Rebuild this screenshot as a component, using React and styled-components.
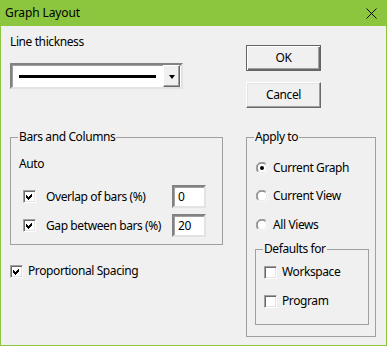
import styled, { createGlobalStyle } from "styled-components";

const GlobalStyle = createGlobalStyle`
  html, body {
    margin: 0;
    padding: 0;
    background: #f0f0f0;
  }
  body {
    font-family: "Noto Sans", "Liberation Sans", sans-serif;
    font-size: 12px;
    line-height: 16px;
    letter-spacing: -0.4px;
    color: #000;
  }
`;

const Window = styled.div`
  width: 387px;
  height: 346px;
  box-sizing: border-box;
  border: 1px solid #8cc63f;
  border-top: 0;
  background: #f0f0f0;
  display: flex;
  flex-direction: column;
`;

const TitleBar = styled.div`
  height: 26px;
  flex: none;
  background: #8cc63f;
  display: flex;
  align-items: center;
  justify-content: space-between;
  padding: 0 9px 0 4px;
`;

const Title = styled.span`
  font-size: 12px;
  letter-spacing: -0.1px;
`;

const Body = styled.div`
  display: grid;
  grid-template-columns: 213px 130px;
  column-gap: 23px;
  padding-left: 9px;
  align-items: start;
`;

const Column = styled.div`
  display: flex;
  flex-direction: column;
  align-items: flex-start;
`;

const Label = styled.div`
  margin-top: ${(p) => p.$top || 0}px;
`;

const Combo = styled.div`
  margin-top: 13px;
  width: 173px;
  height: 26px;
  box-sizing: border-box;
  border: 2px solid;
  border-color: #828282 #e3e3e3 #e3e3e3 #828282;
  box-shadow: inset 1px 1px 0 #a0a0a0;
  background: #fff;
  display: flex;
  align-items: center;
  padding: 0 1px 0 7px;
`;

const LineSample = styled.div`
  flex: 1;
  height: 3px;
  background: #000;
  margin-right: 7px;
`;

const DropButton = styled.div`
  width: 17px;
  height: 22px;
  box-sizing: border-box;
  border: 1px solid;
  border-color: #fff #696969 #696969 #fff;
  box-shadow: inset -1px -1px 0 #a0a0a0;
  background: #f0f0f0;
  display: flex;
  align-items: center;
  justify-content: center;
`;

const Arrow = styled.span`
  width: 0;
  height: 0;
  border-left: 3.5px solid transparent;
  border-right: 3.5px solid transparent;
  border-top: 4px solid #000;
  margin-top: 1px;
`;

const Group = styled.fieldset`
  margin: ${(p) => p.$top || 0}px 0 0 0;
  padding: ${(p) => p.$pad};
  width: ${(p) => p.$width}px;
  min-inline-size: 0;
  box-sizing: border-box;
  border: 1px solid #a0a0a0;
  display: flex;
  flex-direction: column;
`;

const Legend = styled.legend`
  padding: 0 1px;
  margin-left: -1px;
  line-height: 16px;
`;

const Row = styled.div`
  display: flex;
  align-items: center;
  margin-top: ${(p) => p.$top || 0}px;
  padding-left: ${(p) => p.$indent || 0}px;
`;

const RowText = styled.span`
  margin-left: ${(p) => p.$gap}px;
  width: ${(p) => (p.$width ? `${p.$width}px` : "auto")};
`;

const NumberBox = styled.div`
  width: 34px;
  height: 23px;
  box-sizing: border-box;
  border: 2px solid;
  border-color: #828282 #e3e3e3 #e3e3e3 #828282;
  box-shadow: inset 1px 1px 0 #a0a0a0;
  background: #fff;
  padding: 2px 4px;
  line-height: 16px;
`;

const Box = styled.span`
  width: 13px;
  height: 13px;
  flex: none;
  box-sizing: border-box;
  border: 1px solid;
  border-color: #a0a0a0 #fff #fff #a0a0a0;
  box-shadow: inset 1px 1px 0 #696969, inset -1px -1px 0 #e3e3e3;
  background: #fff;
  display: flex;
  align-items: center;
  justify-content: center;
`;

const CheckBox = ({ checked }) => (
  <Box>
    {checked && (
      <svg width="9" height="9" viewBox="0 0 9 9" shapeRendering="crispEdges">
        <polygon points="1,3 3,5 7,1 7,4 3,8 1,6" fill="#000" />
      </svg>
    )}
  </Box>
);

const RadioDot = styled.svg`
  flex: none;
  display: block;
`;

const Radio = ({ checked }) => (
  <RadioDot width="12" height="12" viewBox="0 0 12 12">
    <circle cx="6" cy="6" r="5.5" fill="#fff" />
    <path d="M1.8 10.2 A5.5 5.5 0 0 1 10.2 1.8" stroke="#a0a0a0" fill="none" />
    <path d="M10.2 1.8 A5.5 5.5 0 0 1 1.8 10.2" stroke="#fff" fill="none" />
    <path d="M2.5 9.5 A4.5 4.5 0 0 1 9.5 2.5" stroke="#696969" fill="none" />
    <path d="M9.5 2.5 A4.5 4.5 0 0 1 2.5 9.5" stroke="#e3e3e3" fill="none" />
    {checked && <circle cx="6" cy="6" r="2" fill="#000" />}
  </RadioDot>
);

const Button = styled.button`
  margin-top: ${(p) => p.$top}px;
  width: 75px;
  height: 26px;
  box-sizing: border-box;
  font: inherit;
  letter-spacing: inherit;
  color: #000;
  background: #f0f0f0;
  padding: 0;
  border: 1px solid;
  border-color: ${(p) =>
    p.$default ? "#646464" : "#fff #696969 #696969 #fff"};
  box-shadow: ${(p) =>
    p.$default
      ? "inset 1px 1px 0 #fff, inset -1px -1px 0 #696969, inset -2px -2px 0 #a0a0a0"
      : "inset -1px -1px 0 #a0a0a0, inset 1px 1px 0 #e3e3e3"};
`;

export default function App() {
  return (
    <>
      <GlobalStyle />
      <Window>
        <TitleBar>
          <Title>Graph Layout</Title>
          <svg width="11" height="11" viewBox="0 0 11 11">
            <path d="M0.5 0.5 L10.5 10.5 M10.5 0.5 L0.5 10.5" stroke="#000" strokeWidth="1" />
          </svg>
        </TitleBar>
        <Body>
          <Column>
            <Label $top={8}>Line thickness</Label>
            <Combo>
              <LineSample />
              <DropButton>
                <Arrow />
              </DropButton>
            </Combo>
            <Group $top={40} $width={213} $pad="11px 8px 7px 8px">
              <Legend>Bars and Columns</Legend>
              <div>Auto</div>
              <Row $top={13} $indent={4}>
                <CheckBox checked />
                <RowText $gap={10} $width={126}>Overlap of bars (%)</RowText>
                <NumberBox>0</NumberBox>
              </Row>
              <Row $top={6} $indent={4}>
                <CheckBox checked />
                <RowText $gap={10} $width={126}>Gap between bars (%)</RowText>
                <NumberBox>20</NumberBox>
              </Row>
            </Group>
            <Row $top={18}>
              <CheckBox checked />
              <RowText $gap={5}>Proportional Spacing</RowText>
            </Row>
          </Column>
          <Column>
            <Button $top={19} $default>
              OK
            </Button>
            <Button $top={11}>Cancel</Button>
            <Group $top={21} $width={130} $pad="15px 6px 11px 8px">
              <Legend>Apply to</Legend>
              <Row $indent={1}>
                <Radio checked />
                <RowText $gap={5}>Current Graph</RowText>
              </Row>
              <Row $top={12} $indent={1}>
                <Radio />
                <RowText $gap={5}>Current View</RowText>
              </Row>
              <Row $top={13} $indent={1}>
                <Radio />
                <RowText $gap={5}>All Views</RowText>
              </Row>
              <Group $top={8} $width={114} $pad="7px 6px 15px 8px">
                <Legend>Defaults for</Legend>
                <Row>
                  <CheckBox />
                  <RowText $gap={5}>Workspace</RowText>
                </Row>
                <Row $top={13}>
                  <CheckBox />
                  <RowText $gap={5}>Program</RowText>
                </Row>
              </Group>
            </Group>
          </Column>
        </Body>
      </Window>
    </>
  );
}
